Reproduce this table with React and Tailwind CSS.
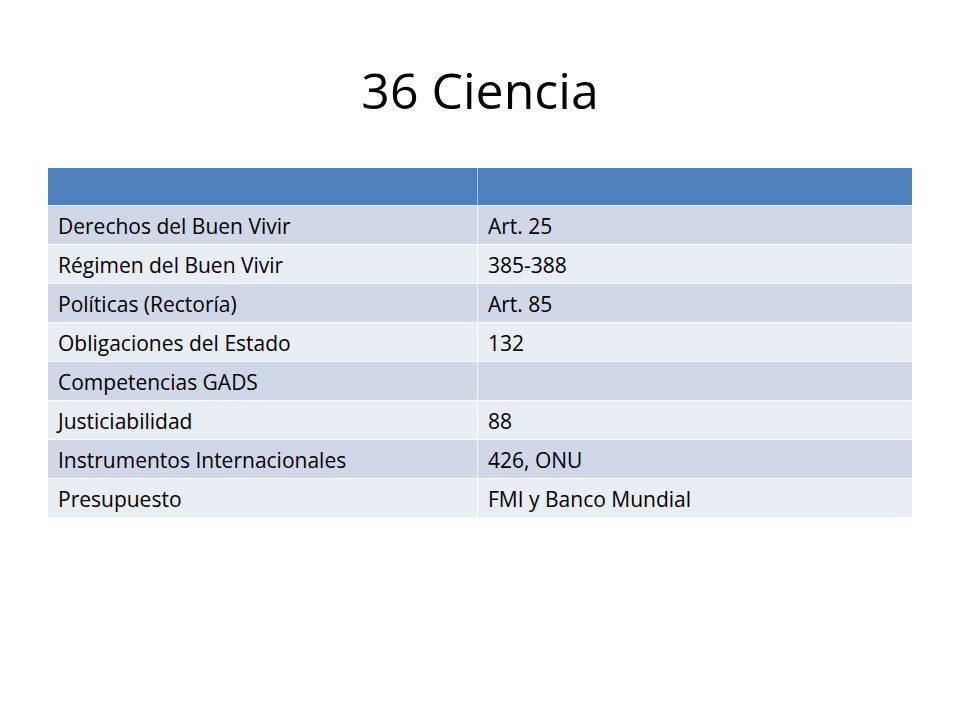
import React from 'react';

const rows = [
  ['Derechos del Buen Vivir', 'Art. 25'],
  ['Régimen del Buen Vivir', '385-388'],
  ['Políticas (Rectoría)', 'Art. 85'],
  ['Obligaciones del Estado', '132'],
  ['Competencias GADS', ''],
  ['Justiciabilidad', '88'],
  ['Instrumentos Internacionales', '426, ONU'],
  ['Presupuesto', 'FMI y Banco Mundial'],
];

const App = () => {
  return (
    <div className="w-[960px] h-[720px] bg-white" style={{ fontFamily: '"Open Sans", Lato, sans-serif' }}>
      {/* Title */}
      <div className="pt-[62px] h-[168px]">
        <h1 className="text-center text-[50px] leading-[56px] text-black">36 Ciencia</h1>
      </div>

      {/* Table */}
      <div className="mx-[48px] w-[864px]">
        <div className="grid grid-cols-[430px_1fr] h-[38px] bg-[#4f81bd] border-b border-white">
          <div className="border-r border-[#a7c0de]"></div>
          <div></div>
        </div>
        {rows.map((row, idx) => (
          <div
            key={idx}
            className={`grid grid-cols-[430px_1fr] h-[39px] items-center text-[21px] text-black border-b border-white ${idx % 2 === 0 ? 'bg-[#d0d8e8]' : 'bg-[#e9edf4]'}`}
          >
            <div className="h-full flex items-center pt-[4px] pl-[10px] border-r border-white whitespace-nowrap">{row[0]}</div>
            <div className="h-full flex items-center pt-[4px] pl-[10px] whitespace-nowrap">{row[1]}</div>
          </div>
        ))}
      </div>
    </div>
  );
};

export default App;
